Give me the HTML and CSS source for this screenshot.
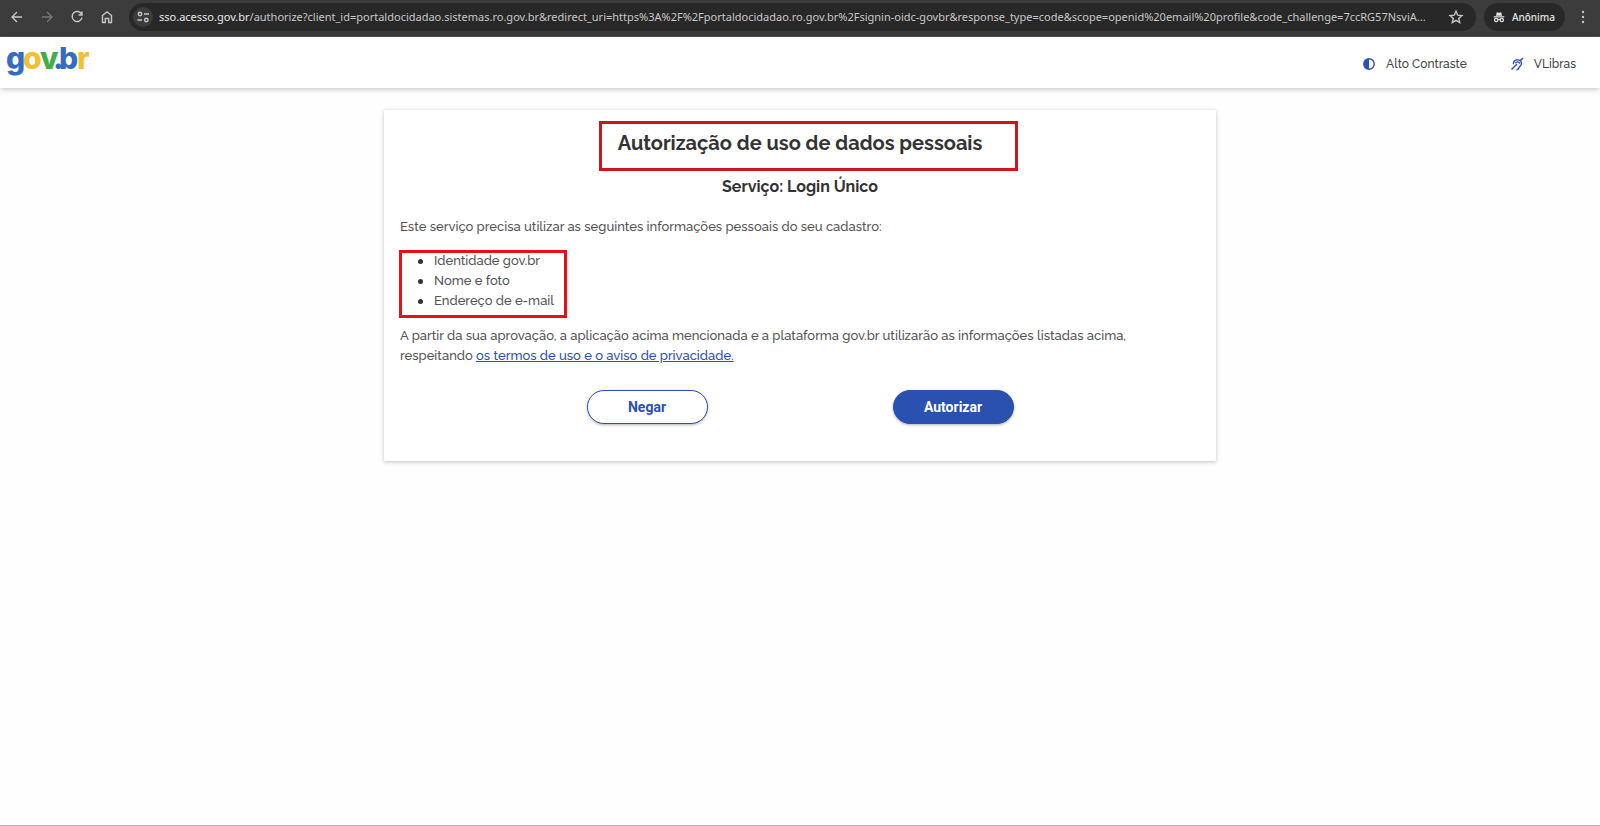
FILE: index.html
```
<!DOCTYPE html>
<html lang="pt-br">
  <head>
    <meta charset="UTF-8" />
    <meta name="viewport" content="width=device-width, initial-scale=1.0" />
    <title>Autorização de uso de dados pessoais</title>
    <link rel="stylesheet" href="styles.css">
  </head>

  <body>
    <div class="browser-bar">
      <div class="nav-buttons">
        <button aria-label="Voltar">
          <svg viewBox="0 0 16 16"><path d="M13 8H3M8 3L3 8l5 5" /></svg>
        </button>
        <button aria-label="Avançar" disabled>
          <svg viewBox="0 0 16 16"><path d="M3 8h10M8 3l5 5-5 5" /></svg>
        </button>
        <button aria-label="Recarregar">
          <svg viewBox="0 0 16 16"><path d="M12.6 5.2A5 5 0 1 0 13 8.6M13 2.5V6H9.5" /></svg>
        </button>
        <button aria-label="Página inicial">
          <svg viewBox="0 0 16 16"><path d="M3.5 6.5L8 2.8l4.5 3.7v7H9.7v-4H6.3v4H3.5z" /></svg>
        </button>
      </div>

      <div class="address">
        <button class="site-info" aria-label="Informações do site">
          <svg viewBox="0 0 16 16"><circle cx="5" cy="5" r="1.7" /><path d="M9 5h5M2.5 11H7" /><circle cx="11.3" cy="11" r="1.7" /></svg>
        </button>
        <p class="url"><span>sso.acesso.gov.br</span>/authorize?client_id=portaldocidadao.sistemas.ro.gov.br&amp;redirect_uri=https%3A%2F%2Fportaldocidadao.ro.gov.br%2Fsignin-oidc-govbr&amp;response_type=code&amp;scope=openid%20email%20profile&amp;code_challenge=7ccRG57NsviA...</p>
        <button class="star" aria-label="Favoritar">
          <svg viewBox="0 0 16 16"><path d="M8 2.3l1.7 3.9 4.2.4-3.2 2.8 1 4.2L8 11.4l-3.7 2.2 1-4.2-3.2-2.8 4.2-.4z" /></svg>
        </button>
      </div>

      <button class="incognito">
        <svg viewBox="0 0 16 16"><path class="fill" d="M4.5 6.5l1-3.9L8 3.2l2.5-.6 1 3.9z" /><path d="M2 7.8h12" /><circle cx="4.8" cy="11.5" r="1.9" /><circle cx="11.2" cy="11.5" r="1.9" /><path d="M6.7 11.2q1.3-.8 2.6 0" /></svg>
        Anônima
      </button>
      <button class="menu" aria-label="Menu">
        <svg viewBox="0 0 16 16"><circle class="fill" cx="8" cy="3" r="1.2" /><circle class="fill" cx="8" cy="8" r="1.2" /><circle class="fill" cx="8" cy="13" r="1.2" /></svg>
      </button>
    </div>

    <header>
      <a href="#" aria-label="gov.br">
        <svg class="logo" viewBox="0 0 86 44">
          <text x="0" y="32" fill="#356bc0">g</text>
          <text x="17" y="32" fill="#f3c032">o</text>
          <text x="34" y="32" fill="#43ae46">v</text>
          <text x="47" y="32" fill="#356bc0">.</text>
          <text x="53" y="32" fill="#356bc0">b</text>
          <text x="71" y="32" fill="#f3c032">r</text>
        </svg>
      </a>
      <nav>
        <a href="#">
          <svg viewBox="0 0 16 16"><circle cx="8" cy="8" r="5.2" /><path class="fill" d="M8 2.8a5.2 5.2 0 0 0 0 10.4z" /></svg>
          Alto Contraste
        </a>
        <a href="#">
          <svg viewBox="0 0 16 16"><path d="M2.5 13.5L8 8M11.2 4.8L14 2M4.3 8.2C4.3 5.5 6 3.9 8.4 3.9c2.6 0 4 1.7 4 3.7 0 2.6-1.9 2.5-2.3 3.9-.4 1.4-1.2 2.3-2.7 2.3M6.3 7.2c.4-.8 1.2-1.3 2.2-1.3 1.2 0 2 .8 2 1.9" /></svg>
          VLibras
        </a>
      </nav>
    </header>

    <main class="card">
      <h1><span class="title">Autorização de uso de dados pessoais</span></h1>
      <h2>Serviço: Login Único</h2>

      <p>Este serviço precisa utilizar as seguintes informações pessoais do seu cadastro:</p>

      <ul>
        <li>Identidade gov.br</li>
        <li>Nome e foto</li>
        <li>Endereço de e-mail</li>
      </ul>

      <p>
        A partir da sua aprovação, a aplicação acima mencionada e a plataforma gov.br utilizarão as informações listadas acima,<br>
        respeitando <a href="#">os termos de uso e o aviso de privacidade.</a>
      </p>

      <div class="buttons">
        <button class="deny">Negar</button>
        <button class="allow">Autorizar</button>
      </div>
    </main>
  </body>
</html>
```
FILE: styles.css
```
/* General */
* {
  box-sizing: border-box;
}

body {
  margin: 0;
  min-height: 100vh;
  font-family: Raleway, Lato, sans-serif;
  font-size: 13px;
  font-weight: 500;
  line-height: 20px;
  color: #555;
  background: #fefefe;
  border-bottom: 1px solid #bbb;
}

button {
  font: inherit;
  color: inherit;
  background: none;
  border: none;
  padding: 0;
  cursor: pointer;
}

svg {
  display: block;
  flex: none;
  width: 16px;
  height: 16px;
  fill: none;
  stroke: currentColor;
  stroke-width: 1.4;
}

.fill {
  fill: currentColor;
  stroke: none;
}

/* Browser bar */
.browser-bar {
  display: flex;
  align-items: center;
  gap: 8px;
  height: 37px;
  padding: 3px 9px 6px;
  font-family: "Noto Sans", sans-serif;
  font-size: 11px;
  font-weight: 400;
  color: #c7c7c7;
  background: #3c3c3c;
  border-bottom: 1px solid #555;
}

.nav-buttons {
  display: flex;
  gap: 14px;
  margin-right: 6px;
}

.nav-buttons button:disabled {
  color: #777;
}

.address {
  flex: 1;
  min-width: 0;
  display: flex;
  align-items: center;
  height: 28px;
  padding: 0 12px 0 4px;
  border-radius: 14px;
  background: #282828;
}

.site-info {
  display: flex;
  align-items: center;
  justify-content: center;
  width: 20px;
  height: 20px;
  margin-right: 6px;
  border-radius: 50%;
  background: #3c3c3c;
}

.url {
  flex: 1;
  margin: 0;
  white-space: nowrap;
}

.url span {
  color: #e8e8e8;
}

.incognito {
  display: flex;
  align-items: center;
  gap: 6px;
  height: 28px;
  padding: 0 10px 0 8px;
  border-radius: 14px;
  font-size: 10px;
  font-weight: 500;
  color: #e3e3e3;
  background: #282828;
}

.incognito svg {
  width: 14px;
  height: 14px;
}

.menu {
  margin-left: 2px;
}

/* Header */
header {
  display: flex;
  justify-content: space-between;
  height: 51px;
  padding: 0 24px 0 6px;
  background: #fff;
  box-shadow: 0 1px 6px rgba(0, 0, 0, 0.25);
}

.logo {
  width: 86px;
  height: 44px;
  font-family: Inter, sans-serif;
  font-size: 30px;
  font-weight: 800;
  stroke: none;
}

nav {
  display: flex;
  align-items: center;
  gap: 42px;
  padding-top: 2px;
  font-size: 12px;
}

nav a {
  display: flex;
  align-items: center;
  gap: 9px;
  color: #444;
  text-decoration: none;
}

nav svg {
  color: #2a50b0;
}

/* Card */
.card {
  width: 52%;
  margin: 22px auto 0;
  padding: 16px 16px 37px;
  background: #fff;
  box-shadow: 0 1px 4px rgba(0, 0, 0, 0.25);
}

h1,
h2 {
  margin: 0;
  text-align: center;
  color: #333;
}

h1 {
  font-size: 20px;
  line-height: 34px;
}

/* Red highlights */
.title,
ul {
  position: relative;
}

.title::after,
ul::after {
  content: "";
  position: absolute;
  border: 3px solid #d01418;
}

.title::after {
  top: -10px;
  right: -36px;
  bottom: -16px;
  left: -19px;
}

h2 {
  margin-top: 17px;
  font-size: 16px;
}

p {
  margin: 20px 0 14px;
}

ul {
  width: 167px;
  margin: 0;
  padding-left: 18px;
  list-style: none;
}

ul::after {
  top: -1px;
  right: 0;
  bottom: -7px;
  left: -1px;
  border-color: #e81014;
}

li {
  display: flex;
  align-items: center;
  gap: 11px;
}

li::before {
  content: "";
  width: 5px;
  height: 5px;
  border-radius: 50%;
  background: #333;
}

ul + p {
  margin-top: 15px;
}

.card p a {
  color: #2a50b0;
}

.buttons {
  display: flex;
  justify-content: center;
  gap: 185px;
  margin-top: 24px;
}

.buttons button {
  width: 121px;
  height: 34px;
  border: 1px solid #2a50b0;
  border-radius: 17px;
  font-family: Roboto, sans-serif;
  font-size: 14px;
  font-weight: bold;
  color: #2a50b0;
  background: #fff;
  box-shadow: 0 1px 3px rgba(0, 0, 0, 0.3);
}

.buttons .allow {
  color: #fff;
  background: #2a50b0;
}
```
